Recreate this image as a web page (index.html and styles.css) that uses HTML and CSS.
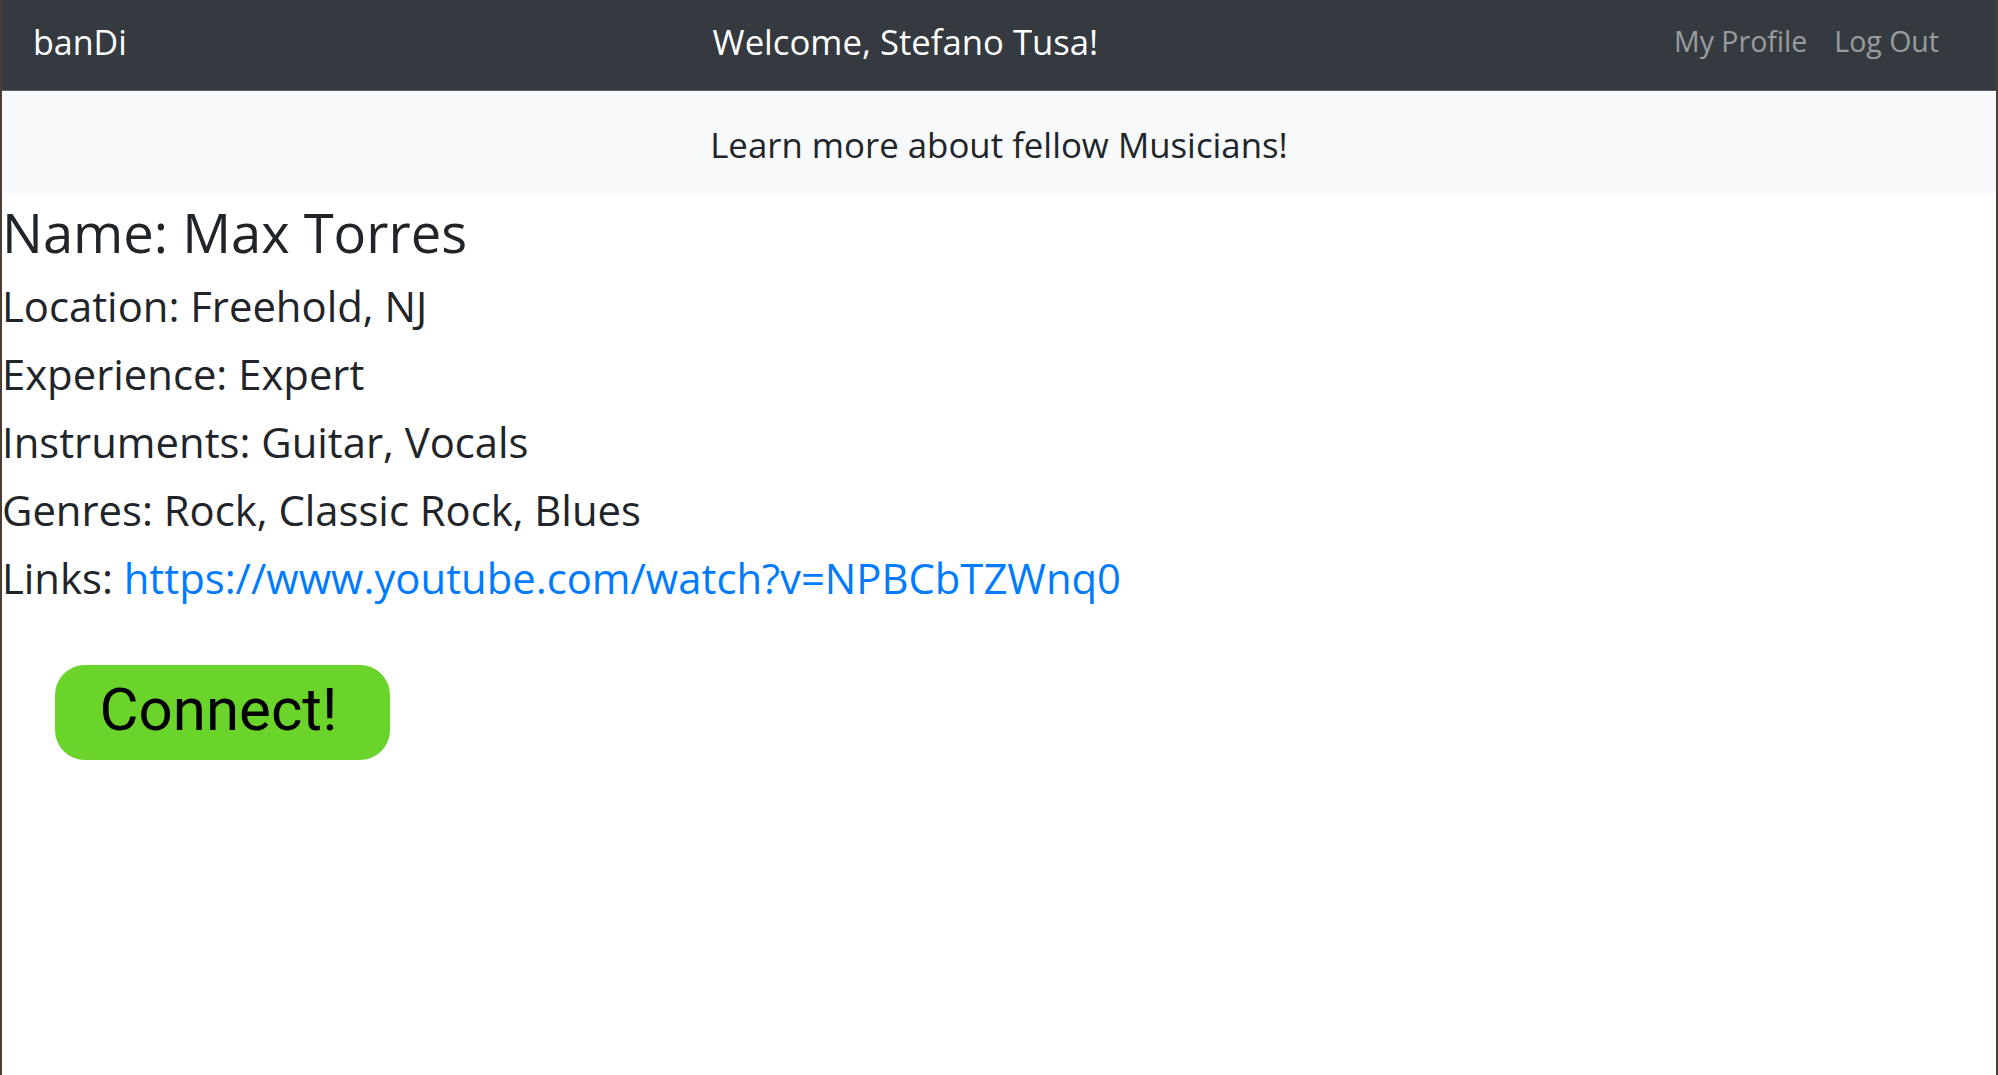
FILE: index.html
```html
<!DOCTYPE html>
<html lang="en">
<head>
<meta charset="utf-8">
<title>banDi</title>
<link rel="stylesheet" href="styles.css">
</head>
<body>
<div class="frame">
  <nav class="navbar">
    <a class="brand" href="#">banDi</a>
    <span class="welcome">Welcome, Stefano Tusa!</span>
    <div class="nav-links">
      <a class="nav-link" href="#">My Profile</a>
      <a class="nav-link" href="#">Log Out</a>
    </div>
  </nav>
  <div class="strip">Learn more about fellow Musicians!</div>
  <main class="content">
    <h2 class="name">Name: Max Torres</h2>
    <p class="row">Location: Freehold, NJ</p>
    <p class="row">Experience: Expert</p>
    <p class="row">Instruments: Guitar, Vocals</p>
    <p class="row">Genres: Rock, Classic Rock, Blues</p>
    <p class="row">Links: <a class="link" href="#">https://www.youtube.com/watch?v=NPBCbTZWnq0</a></p>
    <button class="connect">Connect!</button>
  </main>
</div>
</body>
</html>
```

FILE: styles.css
```css
html, body {
  margin: 0;
  padding: 0;
  height: 100%;
  background: #ffffff;
}
body {
  font-family: "Open Sans", "Noto Sans", sans-serif;
  color: #212529;
}
.frame {
  box-sizing: border-box;
  min-height: 100%;
  border-left: 2px solid #4a3f38;
  border-right: 2px solid #4a3f38;
}
.navbar {
  display: flex;
  align-items: flex-start;
  justify-content: space-between;
  height: 90px;
  background: #343a40;
  border-bottom: 1px solid #5d6268;
  padding: 0 57px 0 31px;
}
.brand {
  margin-top: 19px;
  font-size: 34px;
  line-height: 46px;
  color: #ffffff;
  text-decoration: none;
}
.welcome {
  margin-top: 19px;
  margin-left: 10px;
  font-size: 34.7px;
  line-height: 46px;
  color: #ffffff;
}
.nav-links {
  display: flex;
  gap: 27px;
  margin-top: 22px;
}
.nav-link {
  font-size: 28.5px;
  line-height: 38px;
  color: rgba(255, 255, 255, 0.5);
  text-decoration: none;
}
.strip {
  background: #f8f9fa;
  text-align: center;
  font-size: 34.8px;
  line-height: 96px;
  padding-top: 6px;
  color: #212529;
}
.content {
  padding-top: 5px;
}
.name {
  margin: 0 0 6px 0;
  font-size: 54.3px;
  font-weight: 400;
  line-height: 68px;
}
.row {
  margin: 0;
  font-size: 41.8px;
  line-height: 68px;
}
.link {
  color: #007bff;
  text-decoration: none;
}
.connect {
  display: block;
  margin: 53px 0 0 53px;
  width: 335px;
  height: 95px;
  border: none;
  border-radius: 30px;
  background: #6ad42b;
  color: #000000;
  font-family: Roboto, "Liberation Sans", sans-serif;
  font-size: 60px;
  padding: 0 8px 6px 0;
}
```
